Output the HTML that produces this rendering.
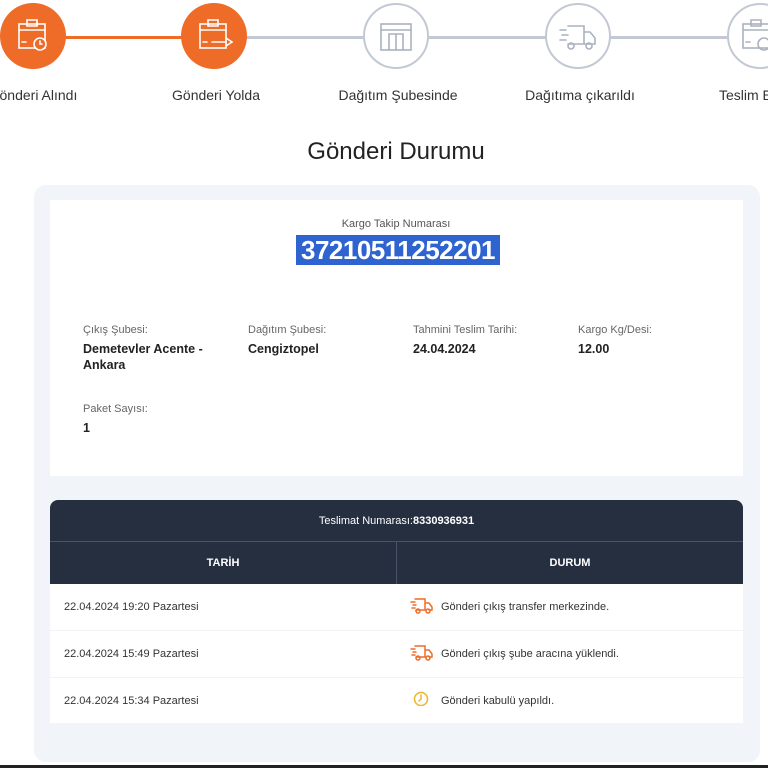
<!DOCTYPE html>
<html><head><meta charset="utf-8"><style>
*{margin:0;padding:0;box-sizing:border-box}
body{width:768px;height:768px;overflow:hidden;background:#fff;font-family:"Liberation Sans",sans-serif;position:relative;color:#222}
.abs{position:absolute}
.circ{position:absolute;width:66px;height:66px;border-radius:50%;top:3px}
.on{background:#ef6b28}
.off{background:#fff;border:2px solid #c3c9d4}
.lbl{position:absolute;top:87px;font-size:14px;color:#333;width:180px;text-align:center;margin-left:-90px}
.k{font-size:11px;color:#666;position:absolute}
.v{font-size:12.5px;font-weight:bold;color:#222;position:absolute;line-height:16px}
.row{position:absolute;left:50px;width:693px;height:46px;background:#fff;font-size:11px;color:#333}
.row span{position:absolute;top:17px}
</style></head><body>
<div class="abs" style="left:33px;top:36px;width:181px;height:3px;background:#ef6b28"></div>
<div class="abs" style="left:214px;top:36px;width:560px;height:3px;background:#c3c9d4"></div>
<div class="circ on" style="left:0px"></div>
<div class="circ on" style="left:181px"></div>
<div class="circ off" style="left:363px"></div>
<div class="circ off" style="left:545px"></div>
<div class="circ off" style="left:727px"></div>
<svg class="abs" style="left:0;top:0" width="768" height="80" fill="none" stroke-width="1.6" stroke-linecap="round">
<g stroke="#fff"><rect x="19" y="24" width="26" height="24"/><path d="M19 30h26M27 20h10v6h-10zM22 42h4"/><circle cx="40" cy="44" r="6" fill="#ef6b28"/><path d="M40 41v3h2"/></g>
<g stroke="#fff"><rect x="200" y="24" width="26" height="24"/><path d="M200 30h26M208 20h10v6h-10zM203 42h4M212 42h14M226 38l6 4-6 4"/></g>
<g stroke="#aab2bf"><rect x="381" y="24" width="30" height="26"/><path d="M381 30h30M389 50V34h14v16M396 34v16"/></g>
<g stroke="#aab2bf"><path d="M568 26h16v18h-16M584 32h6l5 6v6h-11M560 30h6M562 35h6M560 40h6"/><circle cx="571" cy="46" r="3"/><circle cx="589" cy="46" r="3"/></g>
<g stroke="#aab2bf"><rect x="743" y="24" width="26" height="24"/><path d="M743 30h26M751 20h10v6h-10zM746 42h4"/><circle cx="764" cy="44" r="6"/></g>
</svg>
<div class="lbl" style="left:33px">Gönderi Alındı</div>
<div class="lbl" style="left:216px">Gönderi Yolda</div>
<div class="lbl" style="left:398px">Dağıtım Şubesinde</div>
<div class="lbl" style="left:580px">Dağıtıma çıkarıldı</div>
<div class="lbl" style="left:762px;text-align:left;margin-left:-43px">Teslim Edildi</div>
<div class="abs" style="left:0;width:792px;top:138px;text-align:center;font-size:24px;color:#222">Gönderi Durumu</div>
<div class="abs" style="left:34px;top:185px;width:726px;height:577px;background:#f1f4f8;border-radius:12px"></div>
<div class="abs" style="left:50px;top:200px;width:693px;height:276px;background:#fff"></div>
<div class="abs" style="left:0;width:792px;top:218px;text-align:center;font-size:11px;color:#555">Kargo Takip Numarası</div>
<div class="abs" style="left:296px;top:235px;width:204px;height:30px;background:#2f64d0;color:#fff;font-size:26px;font-weight:bold;line-height:30px;text-align:center;letter-spacing:-0.5px">37210511252201</div>
<div class="k" style="left:83px;top:324px">Çıkış Şubesi:</div>
<div class="v" style="left:83px;top:341px">Demetevler Acente -<br>Ankara</div>
<div class="k" style="left:248px;top:324px">Dağıtım Şubesi:</div>
<div class="v" style="left:248px;top:341px">Cengiztopel</div>
<div class="k" style="left:413px;top:324px">Tahmini Teslim Tarihi:</div>
<div class="v" style="left:413px;top:341px">24.04.2024</div>
<div class="k" style="left:578px;top:324px">Kargo Kg/Desi:</div>
<div class="v" style="left:578px;top:341px">12.00</div>
<div class="k" style="left:83px;top:403px">Paket Sayısı:</div>
<div class="v" style="left:83px;top:420px">1</div>
<div class="abs" style="left:50px;top:500px;width:693px;height:84px;background:#262f40;border-radius:8px 8px 0 0"></div>
<div class="abs" style="left:50px;top:541px;width:693px;height:1px;background:#4a5466"></div>
<div class="abs" style="left:396px;top:542px;width:1px;height:42px;background:#4a5466"></div>
<div class="abs" style="left:50px;width:693px;top:515px;text-align:center;color:#fff;font-size:11px">Teslimat Numarası:<b>8330936931</b></div>
<div class="abs" style="left:50px;width:346px;top:557px;text-align:center;color:#fff;font-size:11px;font-weight:bold">TARİH</div>
<div class="abs" style="left:397px;width:346px;top:557px;text-align:center;color:#fff;font-size:11px;font-weight:bold">DURUM</div>
<div class="row" style="top:584px"><span style="left:14px">22.04.2024 19:20 Pazartesi</span><span style="left:391px">Gönderi çıkış transfer merkezinde.</span></div>
<div class="abs" style="left:50px;top:630px;width:693px;height:1px;background:#f1f3f6"></div>
<div class="row" style="top:631px"><span style="left:14px">22.04.2024 15:49 Pazartesi</span><span style="left:391px">Gönderi çıkış şube aracına yüklendi.</span></div>
<div class="abs" style="left:50px;top:677px;width:693px;height:1px;background:#f1f3f6"></div>
<div class="row" style="top:678px;height:45px"><span style="left:14px">22.04.2024 15:34 Pazartesi</span><span style="left:391px">Gönderi kabulü yapıldı.</span></div>
<svg class="abs" style="left:408px;top:596px" width="26" height="110" fill="none" stroke-width="1.5" stroke-linecap="round">
<g stroke="#ef6b28"><path d="M7 3h10v11h-9M17 7h4l3 4v3h-3M3 6h4M5 9h3M4 12h3"/><circle cx="10" cy="15" r="2"/><circle cx="20" cy="15" r="2"/></g>
<g stroke="#ef6b28" transform="translate(0,47)"><path d="M7 3h10v11h-9M17 7h4l3 4v3h-3M3 6h4M5 9h3M4 12h3"/><circle cx="10" cy="15" r="2"/><circle cx="20" cy="15" r="2"/></g>
<g stroke="#f0b429"><circle cx="13" cy="103" r="6.5"/><path d="M13 99v4l-2 2"/></g>
</svg>
<div class="abs" style="left:0;top:765px;width:768px;height:3px;background:#222"></div>
</body></html>
